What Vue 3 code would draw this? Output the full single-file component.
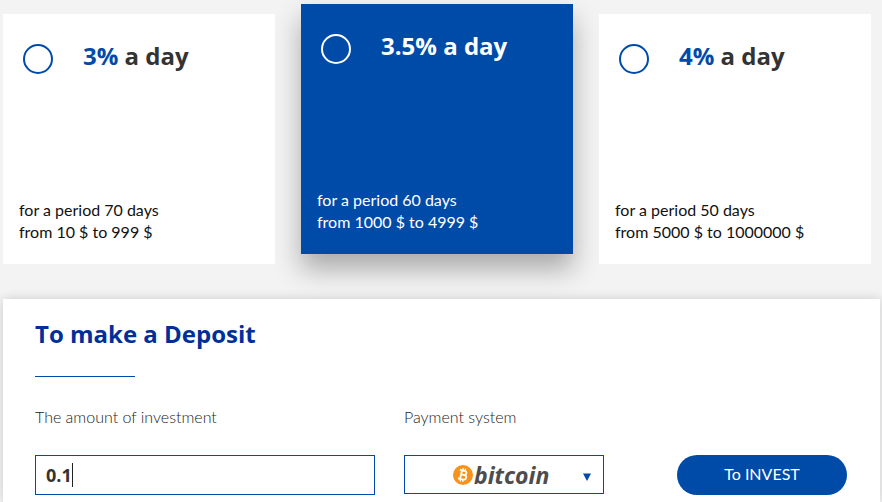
<script setup>
import { ref } from 'vue'

const plans = [
  { id: 'basic', rate: '3%', period: 70, range: 'from 10 $ to 999 $' },
  { id: 'middle', rate: '3.5%', period: 60, range: 'from 1000 $ to 4999 $' },
  { id: 'top', rate: '4%', period: 50, range: 'from 5000 $ to 1000000 $' }
]
const selected = ref('middle')
const amount = ref('0.1')
const payment = ref('bitcoin')
</script>

<template>
  <main class="page">
    <section class="plans">
      <label
        v-for="plan in plans"
        :key="plan.id"
        class="plan"
        :class="{ active: selected === plan.id }"
      >
        <span class="plan-head">
          <input v-model="selected" class="plan-radio" type="radio" name="plan" :value="plan.id" />
          <span class="plan-title"><span class="rate">{{ plan.rate }}</span> a day</span>
        </span>
        <span class="plan-terms">
          <span>for a period {{ plan.period }} days</span>
          <span>{{ plan.range }}</span>
        </span>
      </label>
    </section>

    <form class="deposit" @submit.prevent>
      <h2 class="deposit-title">To make a Deposit</h2>
      <div class="fields">
        <div class="field amount">
          <label class="field-label" for="amount">The amount of investment</label>
          <div class="control">
            <input id="amount" v-model="amount" class="amount-input" type="text" inputmode="decimal" />
            <span class="caret"></span>
          </div>
        </div>
        <div class="field payment">
          <label class="field-label" for="payment">Payment system</label>
          <div class="control">
            <select id="payment" v-model="payment" class="payment-select">
              <option value="bitcoin">bitcoin</option>
            </select>
            <svg class="coin" viewBox="0 0 20 20" aria-hidden="true">
              <circle cx="10" cy="10" r="10" fill="#f7931a" />
              <g transform="rotate(13 10 10)" fill="none" stroke="#fff">
                <path d="M8 5V15M5.8 5.6H10.8A2.1 2.1 0 0 1 10.8 9.8H8M10.8 9.8H11.4A2.3 2.3 0 0 1 11.4 14.4H5.8" stroke-width="1.8" />
                <path d="M8.7 3.2V5.4M11.1 3.2V5.4M8.7 14.6V16.8M11.1 14.6V16.8" stroke-width="1.3" />
              </g>
            </svg>
            <svg class="arrow" viewBox="0 0 8 8" aria-hidden="true">
              <path d="M0 0.5H8L4 8Z" fill="#004ba8" />
            </svg>
          </div>
        </div>
        <button class="invest" type="submit">To INVEST</button>
      </div>
    </form>
  </main>
</template>

<style>
body {
  background: #f3f3f3;
}
</style>

<style scoped>
.page {
  padding: 14px 2px 0 3px;
  font-family: Lato, "Liberation Sans", sans-serif;
  font-size: 16px;
  line-height: 22px;
  color: #111;
}

.plans {
  display: grid;
  grid-template-columns: repeat(3, minmax(0, 1fr));
  gap: 26px;
  padding-right: 9px;
}

.plan {
  display: flex;
  flex-direction: column;
  justify-content: space-between;
  box-sizing: border-box;
  min-height: 250px;
  padding: 25px 16px 21px;
  background: #fff;
  cursor: pointer;
}

.plan.active {
  margin: -10px 0 10px;
  background: #004ba8;
  color: #fff;
  box-shadow: 0 15px 25px rgba(0, 0, 0, 0.3);
}

.plan-head {
  display: flex;
  align-items: flex-start;
  gap: 30px;
  padding-left: 4px;
}

.plan-radio {
  appearance: none;
  flex: none;
  box-sizing: border-box;
  width: 30px;
  height: 30px;
  margin: 5px 0 0;
  border: 2px solid #004ba8;
  border-radius: 50%;
}

.plan-title {
  font: bold 24px/34px "Open Sans", sans-serif;
  color: #333;
}

.rate {
  color: #004ba8;
}

.active .plan-radio {
  border-color: #fff;
}

.active .plan-title,
.active .rate {
  color: #fff;
}

.plan-terms {
  display: flex;
  flex-direction: column;
}

.deposit {
  margin-top: 35px;
  padding: 18px 33px 7px 32px;
  background: #fff;
  box-shadow: 0 0 10px rgba(0, 0, 0, 0.16);
}

.deposit-title {
  margin: 0;
  font: bold 24px/34px "Open Sans", sans-serif;
  color: #002f9c;
}

.deposit-title::after {
  content: "";
  display: block;
  width: 100px;
  height: 1px;
  margin-top: 25px;
  background: #004ba8;
}

.fields {
  display: flex;
  align-items: flex-end;
  margin-top: 29px;
}

.field {
  display: flex;
  flex-direction: column;
  gap: 27px;
}

.field-label {
  font-weight: 300;
  color: #222;
}

.amount {
  flex: 1;
  min-width: 0;
  margin-right: 29px;
}

.payment {
  width: 200px;
  margin-right: 73px;
}

.control {
  position: relative;
  height: 40px;
}

.amount-input {
  box-sizing: border-box;
  width: 100%;
  height: 40px;
  padding: 0 10px;
  border: 1px solid #004ba8;
  border-radius: 0;
  outline: none;
  background: #fff;
  font: bold 18px/24px "Open Sans", sans-serif;
  color: #333;
  caret-color: transparent;
}

.caret {
  position: absolute;
  left: 37px;
  top: 8px;
  width: 1px;
  height: 24px;
  background: #222;
}

.payment-select {
  appearance: none;
  box-sizing: border-box;
  width: 100%;
  height: 39px;
  padding: 0 30px 0 69px;
  border: 1px solid #004ba8;
  border-radius: 0;
  background: #fff;
  font: italic bold 23px/30px "Noto Sans", sans-serif;
  color: #4d4d4d;
}

.coin {
  position: absolute;
  left: 49px;
  top: 10px;
  width: 20px;
  height: 20px;
  pointer-events: none;
}

.arrow {
  position: absolute;
  right: 13px;
  top: 18px;
  width: 8px;
  height: 8px;
  pointer-events: none;
}

.invest {
  width: 170px;
  height: 40px;
  padding: 0 0 2px;
  border: 0;
  border-radius: 20px;
  background: #004ba8;
  color: #fff;
  font: 16px/22px Lato, "Liberation Sans", sans-serif;
  cursor: pointer;
}
</style>
